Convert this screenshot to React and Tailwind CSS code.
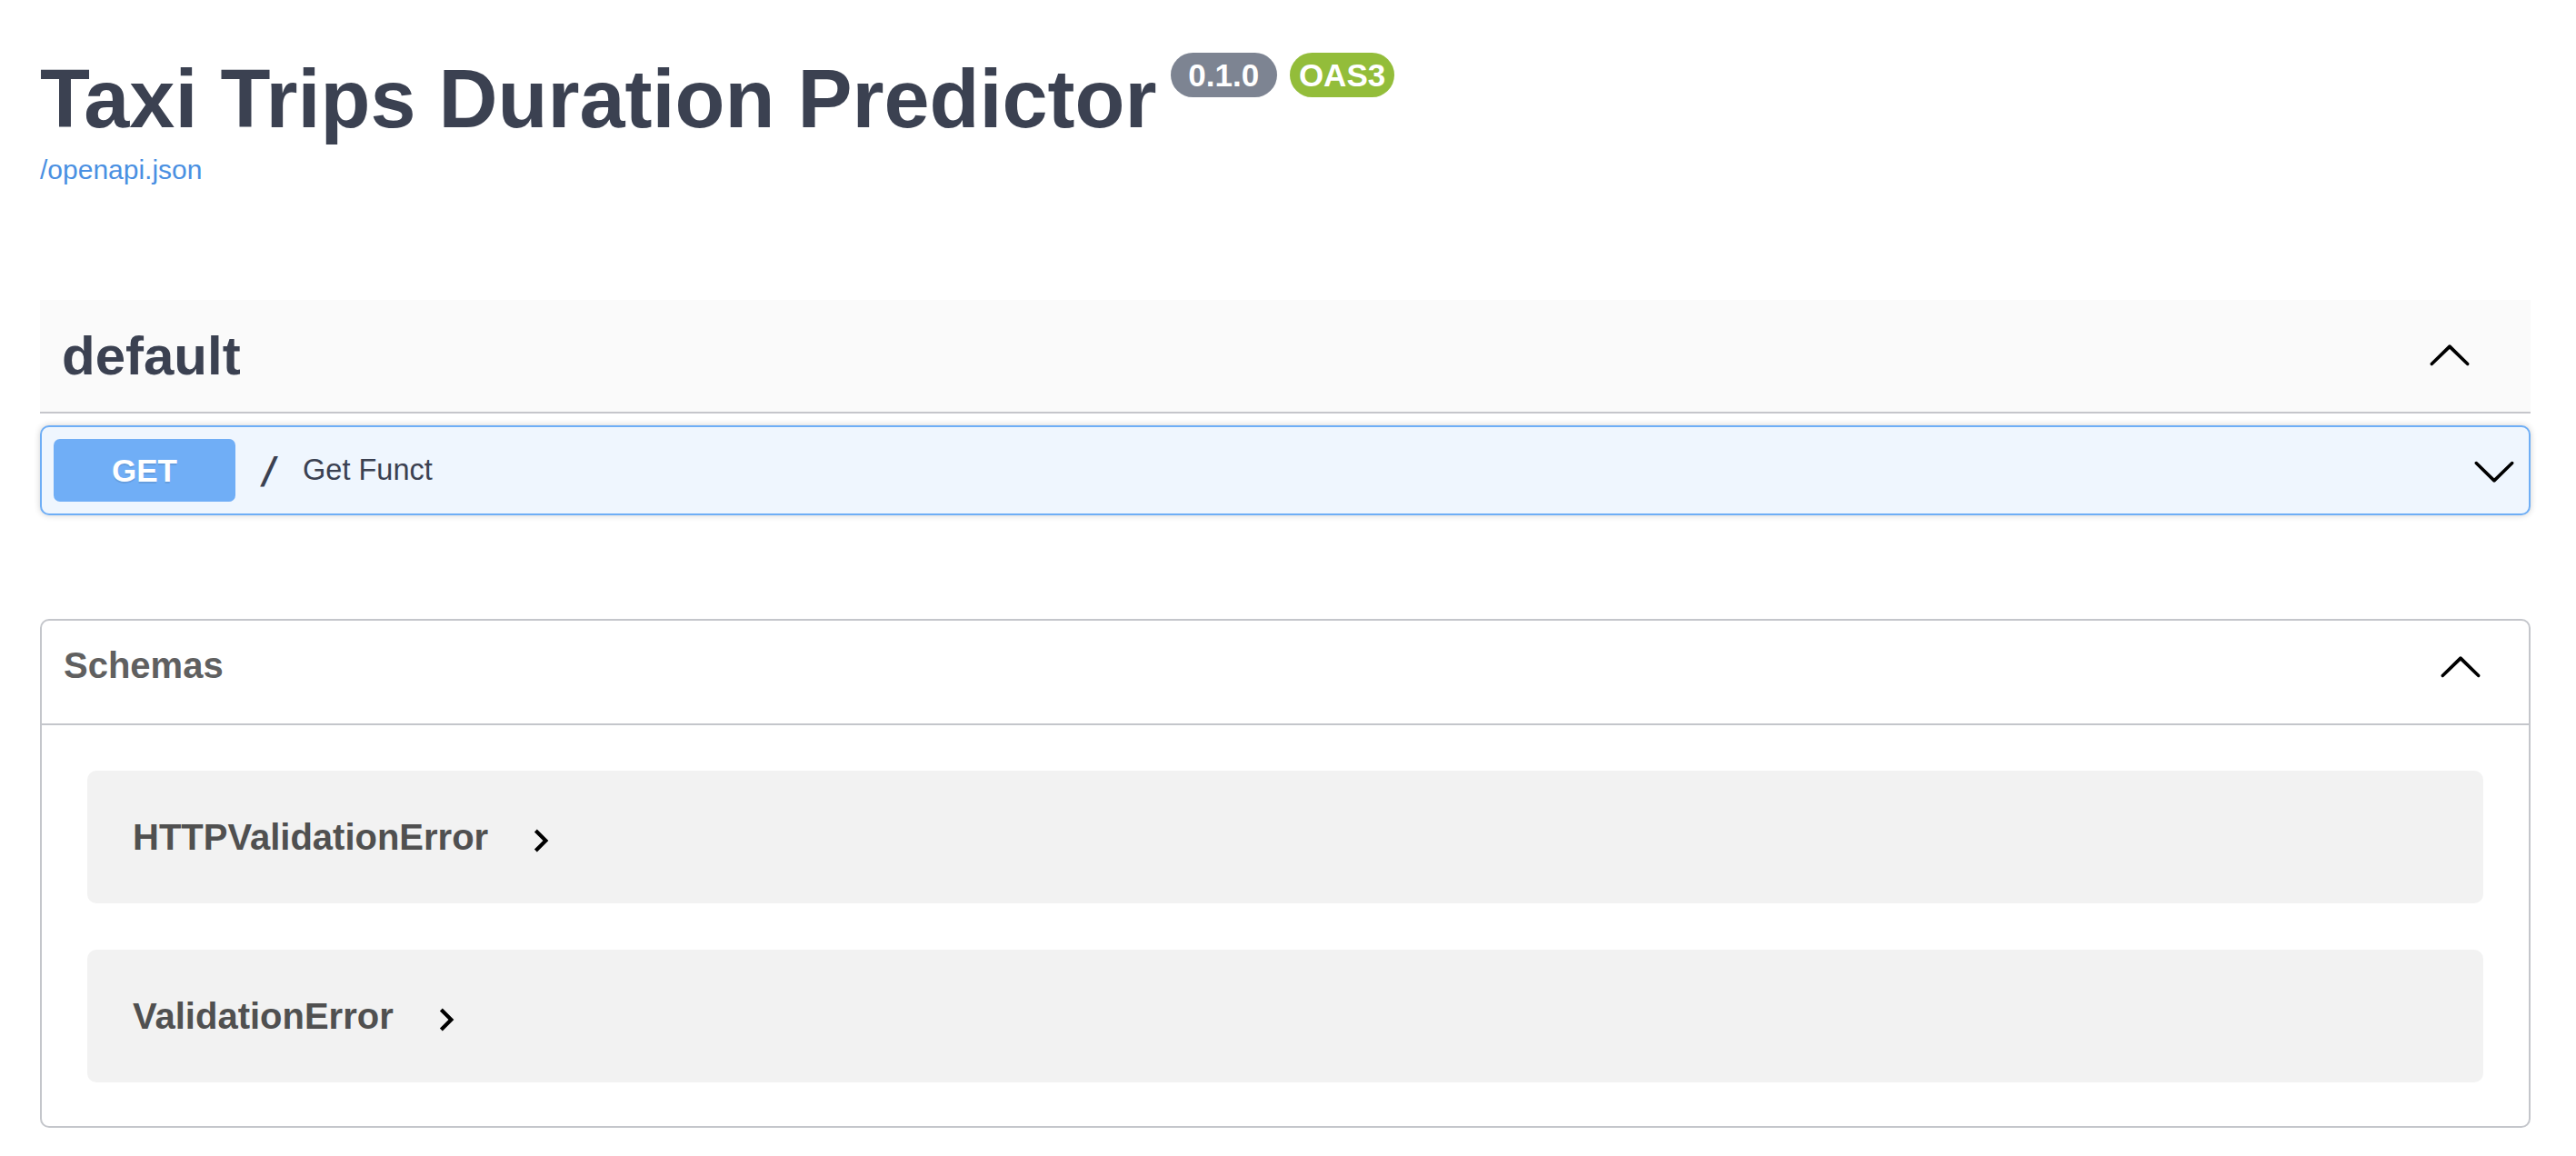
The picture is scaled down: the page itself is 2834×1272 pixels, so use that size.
import React from "react";

const ARROW =
  "M17.418 6.109c.272-.268.709-.268.979 0s.271.701 0 .969l-7.908 7.83c-.27.268-.707.268-.979 0l-7.908-7.83c-.27-.268-.27-.701 0-.969.271-.268.709-.268.979 0L10 13.25l7.418-7.141z";

function BigArrow({ up = false }) {
  return (
    <svg width="50" height="50" viewBox="0 0 20 20" className="shrink-0">
      <path d={ARROW} fill="#000" transform={up ? "rotate(180 10 10)" : undefined} />
    </svg>
  );
}

function ModelToggle() {
  return (
    <svg width="50" height="50" viewBox="0 0 24 24" className="shrink-0 ml-[33px] mt-[8px]">
      <path d="M10 6L8.59 7.41 13.17 12l-4.58 4.59L10 18l6-6z" fill="#000" />
    </svg>
  );
}

function ModelRow({ name }) {
  return (
    <div className="flex items-center h-[146px] rounded-[10px] bg-[#f2f2f2] pl-[50px]">
      <span className="text-[40px] leading-[40px] font-bold text-[#505050]">{name}</span>
      <ModelToggle />
    </div>
  );
}

export default function App() {
  return (
    <div className="min-h-[1272px] w-full bg-white font-['Liberation_Sans',Arial,sans-serif] pl-[44px] pr-[50px] pt-[64px] pb-[30px]">
      {/* info */}
      <div className="flex items-start">
        <h2 className="text-[90px] leading-[90px] font-bold text-[#3b4151]">
          Taxi Trips Duration Predictor
        </h2>
        <div className="flex items-center gap-[14px] ml-[15px] -mt-[6px]">
          <span className="flex items-center h-[49px] px-[10px] rounded-full bg-[#7d8492] text-white text-[35px] leading-none font-bold whitespace-pre">
            {" 0.1.0 "}
          </span>
          <span className="flex items-center h-[49px] px-[10px] rounded-full bg-[#93bd3a] text-white text-[35px] leading-none font-bold">
            OAS3
          </span>
        </div>
      </div>
      <a className="block mt-[18px] text-[30px] leading-[30px] text-[#4a90e2]">/openapi.json</a>

      {/* default tag */}
      <div className="mt-[128px]">
        <div className="flex items-center h-[125px] bg-[#fafafa] border-b-2 border-[#c5c6cb] pl-[24px] pr-[64px]">
          <h3 className="text-[60px] leading-[60px] font-bold text-[#3b4151]">default</h3>
          <div className="ml-auto flex">
            <BigArrow up />
          </div>
        </div>

        <div className="mt-[13px] flex items-center p-[13px] rounded-[10px] border-2 border-[#6eaef6] bg-[#eff6fe] shadow-[0_0_7px_rgba(0,0,0,0.19)]">
          <span className="flex items-center justify-center w-[200px] h-[69px] rounded-[7px] bg-[#70aef6] text-white text-[35px] leading-none font-bold [text-shadow:0_2px_0_rgba(0,0,0,0.1)]">
            GET
          </span>
          <span className="pl-[25px] pr-[25px] font-['DejaVu_Sans_Mono',monospace] font-bold text-[40px] leading-none text-[#3b4151]">
            /
          </span>
          <span className="text-[32.5px] leading-none text-[#3b4151]">Get Funct</span>
          <div className="ml-auto flex">
            <BigArrow />
          </div>
        </div>
      </div>

      {/* schemas */}
      <section className="mt-[114px] rounded-[10px] border-2 border-[#c4c6cb]">
        <div className="flex items-start h-[115px] border-b-2 border-[#c4c6cb] pl-[24px] pr-[50px] pt-[27px]">
          <h4 className="mt-[2px] text-[40px] leading-[40px] font-bold text-[#606060]">Schemas</h4>
          <div className="ml-auto flex">
            <BigArrow up />
          </div>
        </div>
        <div className="flex flex-col gap-[51px] px-[50px] pt-[50px] pb-[48px]">
          <ModelRow name="HTTPValidationError" />
          <ModelRow name="ValidationError" />
        </div>
      </section>
    </div>
  );
}
